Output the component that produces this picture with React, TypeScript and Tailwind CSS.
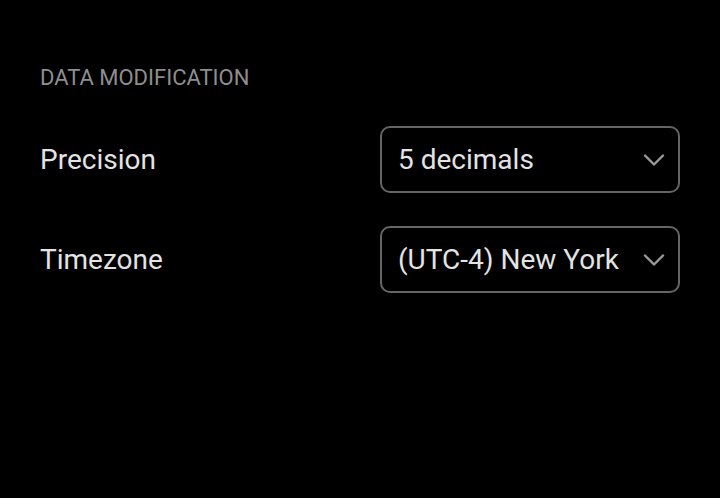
import { ChevronDown } from "lucide-react";

const rows = [
  { label: "Precision", value: "5 decimals" },
  { label: "Timezone", value: "(UTC-4) New York" },
];

export default function App() {
  return (
    <div className="w-[720px] h-[498px] bg-black px-10 pt-[65px] font-['Roboto',sans-serif]">
      <h3 className="text-[22px] leading-[26px] text-[#8e8e8e]">DATA MODIFICATION</h3>
      <div className="mt-[35px] flex flex-col gap-[33px]">
        {rows.map((r) => (
          <div key={r.label} className="flex items-center justify-between h-[67px]">
            <span className="text-[28px] text-[#e3e3e3] pt-[1px]">{r.label}</span>
            <div className="w-[300px] h-[67px] border-2 border-[#656565] rounded-[10px] flex items-center justify-between pl-[16px] pr-[6px]">
              <span className="text-[28px] text-[#e3e3e3] pt-[1px]">{r.value}</span>
              <ChevronDown className="w-[36px] h-[36px] text-[#9a9a9a]" strokeWidth={1.6} />
            </div>
          </div>
        ))}
      </div>
    </div>
  );
}
